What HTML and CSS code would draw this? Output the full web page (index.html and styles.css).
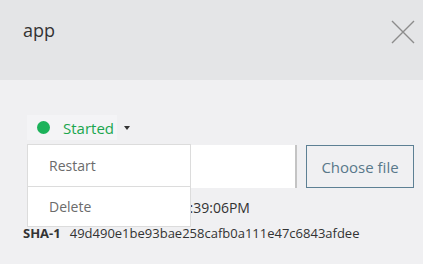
FILE: index.html
```html
<!DOCTYPE html>
<html lang="en">
<head>
    <meta charset="UTF-8">
    <meta name="viewport" content="width=device-width, initial-scale=1.0">
    <title>app</title>
    <link rel="stylesheet" href="styles.css">
</head>
<body>
    <div class="dialog">
        <div class="dialog-header">
            <h1 class="dialog-title">app</h1>
            <button class="close-btn" aria-label="Close">
                <svg width="24" height="24" viewBox="0 0 24 24">
                    <path d="M1 1 L23 23 M23 1 L1 23" stroke="#8c8c8c" stroke-width="1.4" fill="none"/>
                </svg>
            </button>
        </div>

        <div class="dialog-body">
            <div class="status-menu">
                <button class="status-btn">
                    <span class="dot"></span>
                    <span class="status-label">Started</span>
                    <span class="caret"></span>
                </button>
                <ul class="dropdown">
                    <li>Restart</li>
                    <li>Delete</li>
                </ul>
            </div>

            <div class="upload-row">
                <input type="text" class="file-name">
                <button class="choose-btn">Choose file</button>
            </div>

            <div class="info-line date-line">03/14/2017, 5:39:06PM</div>
            <div class="info-line sha-line"><span class="info-key">SHA-1</span>49d490e1be93bae258cafb0a111e47c6843afdee</div>
        </div>
    </div>
</body>
</html>
```

FILE: styles.css
```css
body {
    margin: 0;
    font-family: "Open Sans", "Noto Sans", sans-serif;
    background: #f0f0f2;
    color: #333;
}
.dialog {
    width: 423px;
    height: 264px;
    overflow: hidden;
}
.dialog-header {
    height: 80px;
    background: #e4e5e7;
    display: flex;
    justify-content: space-between;
    align-items: flex-start;
    padding: 0 8px 0 23px;
    box-sizing: border-box;
}
.dialog-title {
    margin: 18px 0 0;
    font-size: 18px;
    line-height: 24px;
    font-weight: normal;
    color: #333;
}
.close-btn {
    margin-top: 20px;
    padding: 0;
    border: none;
    background: none;
    width: 24px;
    height: 24px;
    cursor: pointer;
}
.close-btn svg {
    display: block;
}
.dialog-body {
    padding: 35px 9px 0 23px;
}
.status-menu {
    position: relative;
    margin-left: 4px;
    height: 25px;
}
.status-btn {
    display: flex;
    align-items: center;
    height: 25px;
    padding: 0 0 0 10px;
    border: none;
    background: linear-gradient(to right, #f4f4f6 90px, transparent 90px);
    font-family: inherit;
    font-size: 15px;
    cursor: pointer;
}
.dot {
    width: 13px;
    height: 13px;
    border-radius: 50%;
    background: #1cb25a;
}
.status-label {
    margin-left: 13px;
    color: #1aa64e;
}
.caret {
    margin-left: 10px;
    width: 0;
    height: 0;
    border-left: 3.5px solid transparent;
    border-right: 3.5px solid transparent;
    border-top: 4px solid #333;
}
.dropdown {
    position: absolute;
    top: 29px;
    left: 0;
    width: 162px;
    margin: 0;
    padding: 0;
    list-style: none;
    background: #fff;
    border: 1px solid #dcdcdc;
    z-index: 2;
}
.dropdown li {
    height: 41px;
    line-height: 41px;
    padding: 0 21px;
    font-size: 14px;
    color: #6b6b6b;
}
.dropdown li + li {
    border-top: 1px solid #dcdcdc;
    height: 39px;
    line-height: 39px;
}
.upload-row {
    display: flex;
    margin-top: 5px;
    height: 43px;
}
.file-name {
    flex: 1;
    margin: 0 0 0 4px;
    border: none;
    border-right: 2px solid #c4c4c4;
    background: #fff;
    padding: 0;
}
.choose-btn {
    width: 108px;
    margin-left: 9px;
    border: 1px solid #5d8094;
    background: #f0f0f2;
    color: #59788a;
    font-family: inherit;
    font-size: 15px;
    padding: 0;
}
.info-line {
    line-height: 20px;
    white-space: nowrap;
}
.date-line {
    margin-top: 10px;
    padding-left: 77px;
    font-size: 14px;
    color: #333;
}
.sha-line {
    margin-top: 5px;
    font-size: 13px;
    color: #333;
}
.info-key {
    font-weight: bold;
    margin-right: 9px;
}
```
